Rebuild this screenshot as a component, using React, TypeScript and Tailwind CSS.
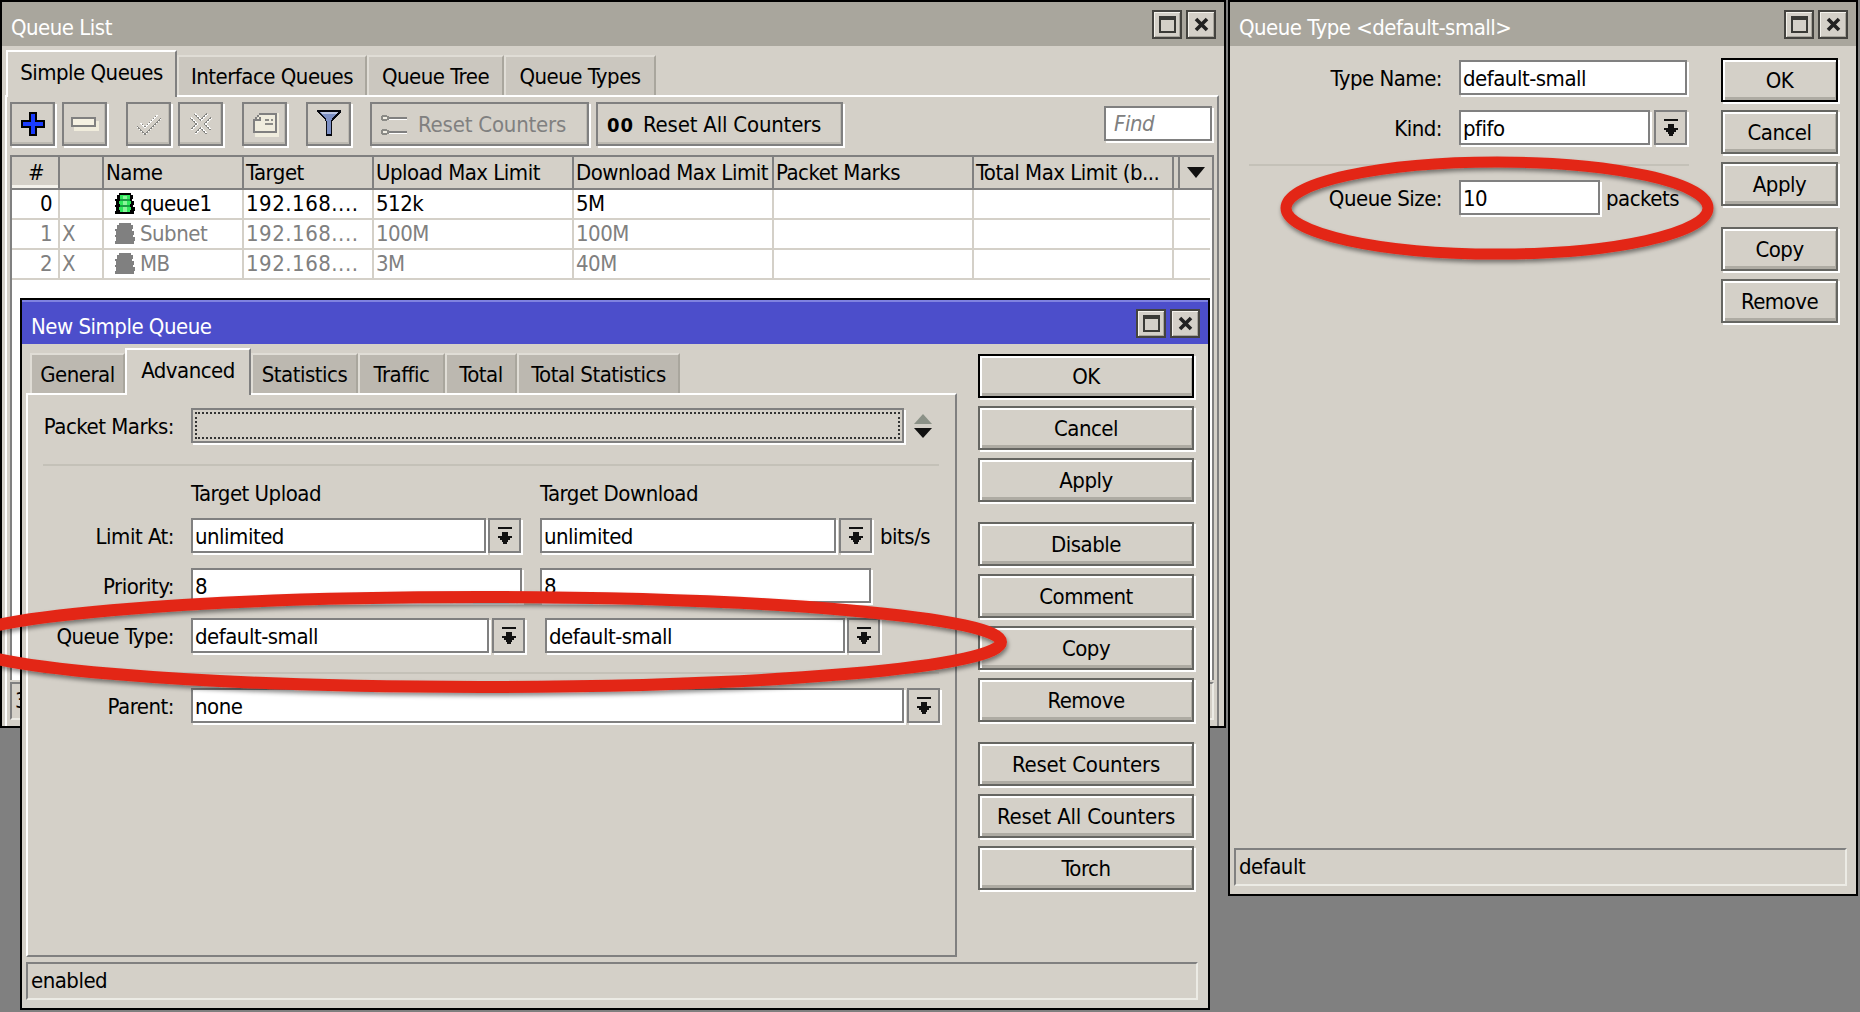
import type { ReactNode } from "react";

const Up = "shadow-[2px_2px_0_#fff]";

const MaxIcon = () => (
  <svg width="17" height="17" viewBox="0 0 17 17" shapeRendering="crispEdges">
    <path d="M0 0h17v17H0z M2 4v11h13V4z" fill="#3a3a36" fillRule="evenodd" />
  </svg>
);

const CloseIcon = () => (
  <svg width="15" height="15" viewBox="0 0 15 15">
    <path d="M2 2l11 11M13 2L2 13" stroke="#222" strokeWidth="3.6" />
  </svg>
);

const TitleBtn = ({ children }: { children: ReactNode }) => (
  <div className="flex h-[29px] w-[30px] items-center justify-center border-2 border-[#44433f] bg-[#d4d0c8] shadow-[inset_1px_1px_0_#f4f2ec,inset_-1px_-1px_0_#a8a59c]">
    {children}
  </div>
);

const Window = ({ title, blue, pos, children }: { title: string; blue?: boolean; pos: string; children: ReactNode }) => (
  <div className={`absolute flex flex-col border-2 border-black bg-[#d4d0c8] ${pos}`}>
    <div className={`flex h-[44px] shrink-0 items-center pl-[9px] pr-[8px] text-white ${blue ? "border-t-2 border-[#7f82e0] bg-[#4c4ecb]" : "bg-[#a9a69d]"}`}>
      <span className="flex-1 pt-[7px]">{title}</span>
      <div className="flex gap-[4px]">
        <TitleBtn><MaxIcon /></TitleBtn>
        <TitleBtn><CloseIcon /></TitleBtn>
      </div>
    </div>
    {children}
  </div>
);

// big button on the right hand side of the dialogs
const Btn = ({ label, primary, className = "" }: { label: string; primary?: boolean; className?: string }) => (
  <div
    className={`flex h-[44px] items-center justify-center border-2 pt-[2px] ${primary ? "border-black" : "border-[#666662]"} shadow-[2px_2px_0_#fff,inset_2px_2px_0_#fff,inset_-1px_-3px_0_#aeaba3] ${className}`}
  >
    {label}
  </div>
);

const Field = ({ w, text, className = "" }: { w: string; text?: string; className?: string }) => (
  <div className={`flex h-[35px] items-center border-2 border-[#808080] bg-white pl-[2px] pt-[3px] ${Up} ${w} ${className}`}>{text}</div>
);

const DD = ({ className = "" }: { className?: string }) => (
  <div className={`flex h-[35px] w-[33px] items-center justify-center border-2 border-[#808080] ${Up} ${className}`}>
    <svg width="16" height="17" viewBox="0 0 16 17" shapeRendering="crispEdges">
      <path d="M1 0h14v2H1z M5 5h6v4h4v2h-2v2h-2v2h-1v2H6v-2H5v-2H3v-2H1V9h4z" fill="#111" />
    </svg>
  </div>
);

const Sep = ({ className = "" }: { className?: string }) => <div className={`h-[2px] bg-[#c4c1b8] ${className}`} />;

const Label = ({ text, w }: { text: string; w: string }) => (
  <div className={`shrink-0 whitespace-nowrap pr-[17px] pt-[3px] text-right ${w}`}>{text}</div>
);

const Status = ({ text, className = "" }: { text: string; className?: string }) => (
  <div className={`flex h-[38px] items-center overflow-hidden border-x-2 border-t-2 border-b-2 border-[#808080] border-r-[#ecebe5] border-b-[#ecebe5] pl-[3px] ${className}`}>{text}</div>
);

const Tab = ({ label, active, dark, w }: { label: string; active?: boolean; dark?: boolean; w: string }) =>
  active ? (
    <div className={`z-10 -mb-[2px] flex h-[47px] items-start justify-center border-x-2 border-t-2 border-white border-r-[#808080] bg-[#d4d0c8] pt-[10px] ${w}`}>{label}</div>
  ) : (
    <div className={`flex h-[40px] items-center justify-center border-t-2 border-l-2 border-r-2 border-[#e0ddd6] border-r-[#a9a69d] pt-[1px] ${dark ? "bg-[#bcb8b0]" : "bg-[#cbc7bf]"} ${w}`}>{label}</div>
  );

const ToolBtn = ({ children, className = "" }: { children: ReactNode; className?: string }) => (
  <div className={`flex h-[44px] items-center border-2 border-[#808080] shadow-[2px_2px_0_#fff,inset_-1px_-2px_0_#bdbab2] ${className}`}>{children}</div>
);

const PlusIcon = () => (
  <svg width="24" height="24" viewBox="0 0 24 24" shapeRendering="crispEdges" className="ml-[1px]">
    <path d="M8 0h8v8h8v8h-8v8H8v-8H0V8h8z" fill="#000" />
    <path d="M10 2h4v8h8v4h-8v8h-4v-8H2v-4h8z" fill="#1a3cff" />
  </svg>
);

const MinusIcon = () => (
  <svg width="28" height="14" viewBox="0 0 28 14" shapeRendering="crispEdges">
    <path d="M3 4h25v10H3z" fill="#f0ecdc" />
    <path d="M0 0h25v10H0z" fill="#808080" />
    <path d="M2 2h21v6H2z" fill="#f5f1e2" />
  </svg>
);

const Dither = ({ id }: { id: string }) => (
  <defs>
    <pattern id={id} width="4" height="4" patternUnits="userSpaceOnUse">
      <rect width="4" height="4" fill="#fff" />
      <rect width="2" height="2" fill="#858581" />
      <rect x="2" y="2" width="2" height="2" fill="#858581" />
    </pattern>
  </defs>
);

const CheckIcon = () => (
  <svg width="26" height="22" viewBox="0 0 26 22" shapeRendering="crispEdges">
    <Dither id="d1" />
    <path d="M3 12l6 6L23 4" fill="none" stroke="url(#d1)" strokeWidth="7" />
    <path d="M3 12l6 6L23 4" fill="none" stroke="#d4d0c8" strokeWidth="3" />
  </svg>
);

const CrossIcon = () => (
  <svg width="24" height="22" viewBox="0 0 24 22" shapeRendering="crispEdges">
    <Dither id="d2" />
    <path d="M4 3l16 16M20 3L4 19" stroke="url(#d2)" strokeWidth="8" />
    <path d="M4 3l16 16M20 3L4 19" stroke="#d4d0c8" strokeWidth="3" />
  </svg>
);

const NoteIcon = () => (
  <svg width="28" height="26" viewBox="0 0 28 26" shapeRendering="crispEdges">
    <path d="M4 10l6-8h18v24H4z" fill="#f3efe0" opacity="0.9" />
    <path d="M8 2h18v2H8zM6 4h2v2H6zM4 6h2v2H4zM2 8h6V6h2v4H4v10h20V4h2v18H2z" fill="#808080" />
    <path d="M14 8h4v2h-4zM20 8h2v2h-2zM14 12h8v2h-8z" fill="#8c8c88" />
  </svg>
);

const FilterIcon = () => (
  <svg width="24" height="28" viewBox="0 0 24 28" shapeRendering="crispEdges">
    <path d="M0 0h24v2l-2 2-2 2-2 2-2 2-1 2v14H9V12L8 10 6 8 4 6 2 4 0 2z" fill="#05070f" />
    <path d="M3 2h18l-6 7-1 3v12h-4V12L9 9z" fill="#7c8fc4" />
    <path d="M3 2h18l-2 2H5z" fill="#b9c4e2" />
  </svg>
);

const ResetIcon = () => (
  <svg width="26" height="20" viewBox="0 0 26 20" shapeRendering="crispEdges">
    <path d="M1 0h5v1h2v4H6v1H1V5H0V1h1zM1 14h5v1h2v4H6v1H1v-1H0v-4h1z" fill="#8a8a86" />
    <path d="M2 2h4v2H2zM2 16h4v2H2z" fill="#f1eee4" />
    <path d="M8 2h18v2H8zM8 16h18v2H8z" fill="#808080" />
    <path d="M8 4h18v1H8zM8 18h18v1H8z" fill="#fff" />
  </svg>
);

const QueueIcon = ({ off }: { off?: boolean }) => (
  <svg width="20" height="22" viewBox="0 0 20 22" shapeRendering="crispEdges" className="shrink-0">
    <path d="M4 0h12v2h2v4h-1v2h2v4h-1v2h2v4h-1v3H0v-3h1v-4H0v-2h1V8H0V6h2V2h2z" fill={off ? "#808080" : "#000"} />
    {!off && (
      <>
        <path d="M5 2h10v17H5zM4 8h12v3H4zM4 14h12v3H4z" fill="#2ee85a" />
        <path d="M8 3h4v16H8z" fill="#8af59a" />
        <path d="M5 6h10v2H5zM5 12h10v2H5z" fill="#1a9c42" />
      </>
    )}
  </svg>
);

const cols = [
  { t: "#", c: "justify-center shadow-[inset_0_-3px_0_#f4f2ec]" },
  { t: "", c: "" },
  { t: "Name", c: "" },
  { t: "Target", c: "" },
  { t: "Upload Max Limit", c: "" },
  { t: "Download Max Limit", c: "" },
  { t: "Packet Marks", c: "" },
  { t: "Total Max Limit (b...", c: "" },
];

const rows = [
  { n: "0", x: "", name: "queue1", up: "512k", down: "5M" },
  { n: "1", x: "X", name: "Subnet", up: "100M", down: "100M" },
  { n: "2", x: "X", name: "MB", up: "3M", down: "40M" },
];

const gridCols = "grid grid-cols-[48px_44px_140px_130px_200px_200px_200px_200px_36px]";

const QueueTable = () => (
  <div className="ml-[3px] mr-[3px] mt-[9px] flex flex-1 flex-col border-2 border-b-0 border-[#808080] bg-white">
    <div className={`${gridCols} h-[33px] border-b-2 border-[#808080] bg-[#d4d0c8]`}>
      {cols.map((c, i) => (
        <div key={i} className={`flex items-center overflow-hidden whitespace-nowrap border-r-2 border-[#808080] pl-[2px] ${c.c}`}>{c.t}</div>
      ))}
      <div className="flex items-center">
        <div className="ml-[4px] h-full w-[2px] bg-[#808080]" />
        <svg width="18" height="11" viewBox="0 0 18 11" className="ml-[7px]"><path d="M0 0h18L9 11z" fill="#111" /></svg>
      </div>
    </div>
    {rows.map((r) => {
      const off = r.x === "X";
      const cell = "flex items-center overflow-hidden whitespace-nowrap border-r-2 border-b-2 border-[#d4d0c8] pl-[2px]";
      return (
        <div key={r.n} className={`${gridCols} h-[30px] ${off ? "text-[#808080]" : "text-black"}`}>
          <div className={`${cell} justify-end pr-[6px]`}>{r.n}</div>
          <div className={cell}>{r.x}</div>
          <div className={`${cell} gap-[5px] pl-[11px]`}><QueueIcon off={off} />{r.name}</div>
          <div className={`${cell} tracking-[0.5px]`}>192.168....</div>
          <div className={cell}>{r.up}</div>
          <div className={cell}>{r.down}</div>
          <div className={cell}></div>
          <div className={cell}></div>
          <div className="border-b-2 border-[#d4d0c8]"></div>
        </div>
      );
    })}
  </div>
);

const QueueList = () => (
  <Window title="Queue List" pos="left-0 top-0 h-[728px] w-[1226px]">
    <div className="flex flex-1 flex-col px-[3px] pt-[4px]">
      <div className="flex h-[45px] items-end pl-[1px]">
        <Tab active label="Simple Queues" w="w-[171px]" />
        <Tab label="Interface Queues" w="w-[190px]" />
        <Tab label="Queue Tree" w="w-[137px]" />
        <Tab label="Queue Types" w="w-[152px]" />
      </div>
      <div className="mr-[2px] flex flex-1 flex-col border-x-2 border-t-2 border-white border-r-[#808080] pb-[4px]">
        <div className="flex items-start pl-[3px] pr-[5px] pt-[5px]">
          <ToolBtn className="w-[45px] justify-center"><PlusIcon /></ToolBtn>
          <ToolBtn className="ml-[7px] w-[45px] justify-center"><MinusIcon /></ToolBtn>
          <ToolBtn className="ml-[19px] w-[45px] justify-center"><CheckIcon /></ToolBtn>
          <ToolBtn className="ml-[7px] w-[45px] justify-center"><CrossIcon /></ToolBtn>
          <ToolBtn className="ml-[19px] w-[45px] justify-center"><NoteIcon /></ToolBtn>
          <ToolBtn className="ml-[19px] w-[45px] justify-center"><FilterIcon /></ToolBtn>
          <ToolBtn className="ml-[19px] w-[219px] gap-[11px] pl-[9px] pt-[2px] tracking-[-0.2px] text-[#808080]"><ResetIcon />Reset Counters</ToolBtn>
          <ToolBtn className="ml-[7px] w-[247px] gap-[9px] pl-[9px] pt-[2px] tracking-[-0.2px]">
            <span className="text-[20px] font-bold tracking-[1px]">00</span>Reset All Counters
          </ToolBtn>
          <div className={`ml-auto mt-[4px] flex h-[35px] w-[108px] items-center border-2 border-[#808080] bg-white pl-[8px] italic text-[#808080] ${Up}`}>Find</div>
        </div>
        <QueueTable />
        <div className="mx-[3px] mt-[2px] pb-[2px]">
          <Status text="3 items" />
        </div>
      </div>
    </div>
  </Window>
);

const SpinArrows = () => (
  <svg width="18" height="24" viewBox="0 0 18 24" className="ml-[10px] shrink-0">
    <path d="M9 0l9 10H0z" fill="#8b9187" />
    <path d="M0 14h18l-9 10z" fill="#111" />
  </svg>
);

const NewSimpleQueue = () => (
  <Window blue title="New Simple Queue" pos="left-[20px] top-[298px] h-[712px] w-[1190px]">
    <div className="flex flex-1 flex-col pl-[4px] pr-[10px]">
      <div className="flex flex-1">
        <div className="flex w-[931px] flex-col pt-[4px]">
          <div className="flex h-[45px] items-end pl-[4px]">
            <Tab dark label="General" w="w-[95px]" />
            <Tab active label="Advanced" w="w-[126px]" />
            <Tab dark label="Statistics" w="w-[107px]" />
            <Tab dark label="Traffic" w="w-[87px]" />
            <Tab dark label="Total" w="w-[72px]" />
            <Tab dark label="Total Statistics" w="w-[163px]" />
          </div>
          <div className="flex flex-1 flex-col border-2 border-white border-r-[#808080] border-b-[#808080] pt-[13px]">
            <div className="flex h-[35px] items-center">
              <Label text="Packet Marks:" w="w-[163px]" />
              <div className={`h-[35px] w-[713px] border-2 border-[#808080] p-[2px] ${Up}`}>
                <div className="h-full border-2 border-dotted border-[#333]" />
              </div>
              <SpinArrows />
            </div>
            <Sep className="ml-[15px] mr-[16px] mt-[21px]" />
            <div className="ml-[163px] mt-[15px] flex h-[26px] items-center">
              <span className="w-[349px]">Target Upload</span>
              <span>Target Download</span>
            </div>
            <div className="mt-[11px] flex items-center">
              <Label text="Limit At:" w="w-[163px]" />
              <Field w="w-[295px]" text="unlimited" />
              <DD className="ml-[2px]" />
              <Field w="w-[296px]" text="unlimited" className="ml-[19px]" />
              <DD className="ml-[3px]" />
              <span className="ml-[8px] pt-[3px]">bits/s</span>
            </div>
            <div className="mt-[15px] flex items-center">
              <Label text="Priority:" w="w-[163px]" />
              <Field w="w-[331px]" text="8" />
              <Field w="w-[331px]" text="8" className="ml-[18px]" />
            </div>
            <div className="mt-[15px] flex items-center">
              <Label text="Queue Type:" w="w-[163px]" />
              <Field w="w-[298px]" text="default-small" />
              <DD className="ml-[3px]" />
              <Field w="w-[300px]" text="default-small" className="ml-[20px]" />
              <DD className="ml-[2px]" />
            </div>
            <Sep className="ml-[15px] mr-[16px] mt-[19px]" />
            <div className="mt-[14px] flex items-center">
              <Label text="Parent:" w="w-[163px]" />
              <Field w="w-[713px]" text="none" />
              <DD className="ml-[3px]" />
            </div>
          </div>
        </div>
        <div className="ml-[21px] flex w-[216px] flex-col pt-[10px]">
          <Btn primary label="OK" />
          <Btn label="Cancel" className="mt-[8px]" />
          <Btn label="Apply" className="mt-[8px]" />
          <Btn label="Disable" className="mt-[20px]" />
          <Btn label="Comment" className="mt-[8px]" />
          <Btn label="Copy" className="mt-[8px]" />
          <Btn label="Remove" className="mt-[8px]" />
          <Btn label="Reset Counters" className="mt-[20px] tracking-[-0.2px]" />
          <Btn label="Reset All Counters" className="mt-[8px] tracking-[-0.2px]" />
          <Btn label="Torch" className="mt-[8px]" />
        </div>
      </div>
      <Status text="enabled" className="mb-[8px] mt-[5px]" />
    </div>
  </Window>
);

const QueueType = () => (
  <Window title="Queue Type <default-small>" pos="left-[1228px] top-0 h-[896px] w-[630px]">
    <div className="flex flex-1 flex-col pl-[4px] pr-[9px]">
      <div className="flex flex-1">
        <div className="flex w-[457px] flex-col pt-[14px]">
          <div className="flex items-center">
            <Label text="Type Name:" w="w-[225px]" />
            <Field w="w-[228px]" text="default-small" />
          </div>
          <div className="mt-[15px] flex items-center">
            <Label text="Kind:" w="w-[225px]" />
            <Field w="w-[191px]" text="pfifo" />
            <DD className="ml-[4px]" />
          </div>
          <Sep className="ml-[15px] mr-[2px] mt-[19px]" />
          <div className="mt-[14px] flex items-center">
            <Label text="Queue Size:" w="w-[225px]" />
            <Field w="w-[141px]" text="10" />
            <span className="ml-[6px] pt-[3px]">packets</span>
          </div>
        </div>
        <div className="ml-[30px] flex w-[117px] flex-col pt-[12px]">
          <Btn primary label="OK" />
          <Btn label="Cancel" className="mt-[8px]" />
          <Btn label="Apply" className="mt-[8px]" />
          <Btn label="Copy" className="mt-[21px]" />
          <Btn label="Remove" className="mt-[8px]" />
        </div>
      </div>
      <Status text="default" className="mb-[8px]" />
    </div>
  </Window>
);

const Annotations = () => (
  <svg width="1860" height="1012" viewBox="0 0 1860 1012" className="pointer-events-none absolute left-0 top-0">
    <defs>
      <filter id="sh" x="-5%" y="-20%" width="110%" height="140%">
        <feDropShadow dx="1" dy="3" stdDeviation="2" floodColor="#000" floodOpacity="0.45" />
      </filter>
    </defs>
    <ellipse cx="480" cy="642" rx="521" ry="45" fill="none" stroke="#e32719" strokeWidth="12" filter="url(#sh)" />
    <ellipse cx="1497" cy="208" rx="211" ry="46" fill="none" stroke="#e32719" strokeWidth="11" filter="url(#sh)" />
  </svg>
);

export default function App() {
  return (
    <div className="relative h-[1012px] w-[1860px] overflow-hidden bg-[#808080] font-['DejaVu_Sans',sans-serif] text-[22px] leading-none font-stretch-condensed tracking-[-0.5px] text-black">
      <QueueList />
      <NewSimpleQueue />
      <QueueType />
      <Annotations />
    </div>
  );
}
